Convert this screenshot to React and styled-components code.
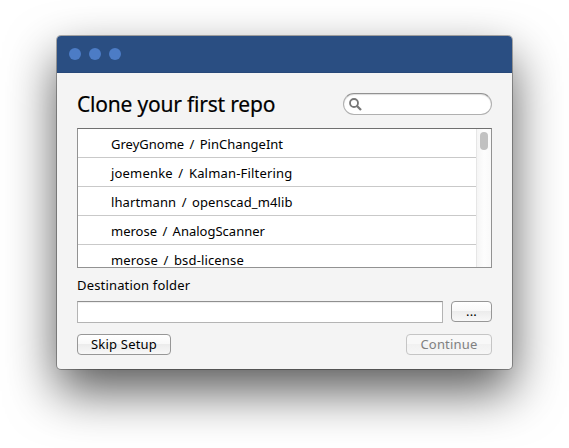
import React from "react";
import styled, { createGlobalStyle } from "styled-components";

const GlobalStyle = createGlobalStyle`
  html, body { margin: 0; background: #fff; overflow: hidden; }
  * { box-sizing: border-box; }
  body, button, input { font-family: "Noto Sans", "Open Sans", sans-serif; font-size: 13px; color: #000; }
`;

const Desktop = styled.main`
  width: 569px;
  height: 448px;
  padding: 36px 57px 0;
  overflow: hidden;
`;

const Window = styled.section`
  display: flex;
  flex-direction: column;
  width: 455px;
  height: 333px;
  border-radius: 4px;
  background: #f4f4f4;
  box-shadow: 0 0 0 1px rgba(0, 0, 0, 0.3), 0 22px 50px rgba(0, 0, 0, 0.66);
`;

const TitleBar = styled.header`
  display: flex;
  align-items: center;
  gap: 8px;
  height: 37px;
  padding-left: 12px;
  border-radius: 4px 4px 0 0;
  background: #2a4e82;
  border-bottom: 1px solid #274879;
`;

const Dot = styled.span`
  width: 12px;
  height: 12px;
  border-radius: 50%;
  background: #4c7cc6;
`;

const Content = styled.div`
  display: flex;
  flex-direction: column;
  padding: 20px 20px 0;
`;

const Heading = styled.div`
  display: flex;
  justify-content: space-between;
  height: 35px;
`;

const Title = styled.h1`
  margin: 0;
  font-size: 21px;
  font-weight: 400;
  line-height: 22px;
  letter-spacing: -0.2px;
  white-space: nowrap;
  -webkit-text-stroke: 0.2px #000;
`;

const SearchBox = styled.label`
  display: flex;
  align-items: center;
  width: 149px;
  height: 22px;
  padding-left: 5px;
  border: 1px solid #b0b0b0;
  border-top-color: #929292;
  border-radius: 11px;
  background: #fff;
  box-shadow: inset 0 1px 1px #ddd;
`;

const SearchInput = styled.input`
  width: 120px;
  border: 0;
  outline: 0;
  background: transparent;
`;

const List = styled.div`
  display: flex;
  height: 140px;
  border: 1px solid #929292;
  border-top-color: #707070;
  background: #fff;
  overflow: hidden;
`;

const Rows = styled.div`
  flex: 1;
`;

const Row = styled.div`
  height: 29px;
  padding-left: 33px;
  border-bottom: 1px solid #c9c9c9;
  line-height: 30px;
  white-space: nowrap;
  word-spacing: 2px;
  letter-spacing: ${(p) => p.$tracking}px;
`;

const ScrollTrack = styled.div`
  width: 15px;
  padding: 3px 3px 0;
  border-left: 1px solid #e6e6e6;
  background: linear-gradient(90deg, #f5f5f5, #fdfdfd 50%, #f9f9f9);
`;

const ScrollThumb = styled.div`
  width: 8px;
  height: 18px;
  border-radius: 4px;
  background: #c1c1c1;
`;

const FieldLabel = styled.label`
  height: 33px;
  line-height: 35px;
  letter-spacing: 0.17px;
`;

const FieldRow = styled.div`
  display: flex;
  gap: 8px;
  height: 33px;
`;

const PathInput = styled.input`
  width: 366px;
  height: 22px;
  border: 1px solid #b4b4b4;
  border-top-color: #8f8f8f;
  outline: 0;
  background: #fff;
  box-shadow: inset 0 1px 1px #eee;
`;

const Actions = styled.div`
  display: flex;
  justify-content: space-between;
`;

const Button = styled.button`
  width: ${(p) => p.$width}px;
  height: 21px;
  padding: 0;
  border: 1px solid ${(p) => (p.disabled ? "#c5c5c5" : "#979797")};
  border-radius: 4px;
  background: ${(p) =>
    p.disabled
      ? "linear-gradient(#f8f8f8 50%, #f1f1f1 50%, #f6f6f6)"
      : "linear-gradient(#fff, #f8f8f8 50%, #ececec 50%, #f8f8f8)"};
  color: ${(p) => (p.disabled ? "#808080" : "#000")};
  line-height: 19px;
  letter-spacing: 0.2px;
  text-align: center;
`;

const repos = [
  { name: "GreyGnome / PinChangeInt", tracking: 0 },
  { name: "joemenke / Kalman-Filtering", tracking: 0.18 },
  { name: "lhartmann / openscad_m4lib", tracking: 0.1 },
  { name: "merose / AnalogScanner", tracking: 0 },
  { name: "merose / bsd-license", tracking: 0.15 },
];

export default function App() {
  return (
    <Desktop>
      <GlobalStyle />
      <Window>
        <TitleBar>
          <Dot />
          <Dot />
          <Dot />
        </TitleBar>
        <Content>
          <Heading>
            <Title>Clone your first repo</Title>
            <SearchBox>
              <svg width="13" height="13" viewBox="0 0 13 13" fill="none" stroke="#777">
                <circle cx="5" cy="5" r="4" strokeWidth="1.8" />
                <path d="M8 8l4 4" strokeWidth="2.3" />
              </svg>
              <SearchInput aria-label="Search" />
            </SearchBox>
          </Heading>
          <List>
            <Rows>
              {repos.map((r) => (
                <Row key={r.name} $tracking={r.tracking}>{r.name}</Row>
              ))}
            </Rows>
            <ScrollTrack>
              <ScrollThumb />
            </ScrollTrack>
          </List>
          <FieldLabel htmlFor="dest">Destination folder</FieldLabel>
          <FieldRow>
            <PathInput id="dest" />
            <Button $width={41}>...</Button>
          </FieldRow>
          <Actions>
            <Button $width={94}>Skip Setup</Button>
            <Button $width={86} disabled>Continue</Button>
          </Actions>
        </Content>
      </Window>
    </Desktop>
  );
}
